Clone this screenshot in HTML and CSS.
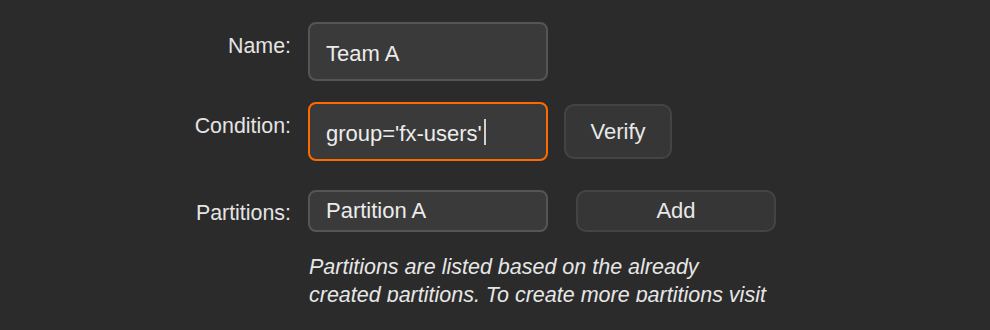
FILE: index.html
```html
<!DOCTYPE html>
<html lang="en">
<head>
<meta charset="utf-8">
<title>Team form</title>
<link rel="stylesheet" href="styles.css">
</head>
<body>
<div class="panel">
  <form class="form">
    <div class="row row-name">
      <label class="label">Name:</label>
      <div class="field field-tall">Team A</div>
    </div>
    <div class="row row-condition">
      <label class="label">Condition:</label>
      <div class="field field-tall field-focus">group='fx-users'<span class="caret"></span></div>
      <button type="button" class="btn btn-verify">Verify</button>
    </div>
    <div class="row row-partitions">
      <label class="label">Partitions:</label>
      <div class="field field-short">Partition A</div>
      <button type="button" class="btn btn-add">Add</button>
    </div>
    <div class="row row-help">
      <div class="label"></div>
      <p class="help">Partitions are listed based on the already created partitions. To create more partitions visit the partitions page.</p>
    </div>
  </form>
</div>
</body>
</html>
```

FILE: styles.css
```css
html, body {
  margin: 0;
  padding: 0;
  background: #2b2b2b;
}

body {
  font-family: "Liberation Sans", Arial, sans-serif;
  font-size: 22px;
  color: #e6e6e6;
}

.panel {
  height: 302px;
  overflow: hidden;
}

.form {
  padding-top: 22px;
  display: flex;
  flex-direction: column;
}

.row {
  display: flex;
  align-items: flex-start;
}

.row-name {
  margin-bottom: 21px;
}

.row-condition {
  margin-bottom: 29px;
}

.row-help {
  margin-top: 21px;
}

.label {
  width: 291px;
  flex: none;
  text-align: right;
  padding-top: 12px;
  margin-right: 17px;
  color: #e4e4e4;
  font-size: 21.4px;
  line-height: 24px;
}

.row-partitions .label {
  padding-top: 11px;
}

.row-help .label {
  padding-top: 0;
}

.field {
  box-sizing: border-box;
  width: 240px;
  flex: none;
  background: #3a3a3a;
  border: 2px solid #555555;
  border-radius: 8px;
  padding: 0 16px;
  display: flex;
  align-items: center;
  color: #ececec;
  line-height: 24px;
  white-space: nowrap;
}

.field-tall {
  height: 59px;
  padding-top: 4px;
}

.field-short {
  height: 42px;
}

.field-focus {
  border-color: #ff6a00;
}

.caret {
  flex: none;
  width: 2px;
  height: 26px;
  margin-left: 2px;
  margin-top: -4px;
  background: #d0d0d0;
}

.btn {
  box-sizing: border-box;
  flex: none;
  font: inherit;
  color: #e8e8e8;
  background: #363636;
  border: 2px solid #444444;
  border-radius: 10px;
  padding: 0;
  line-height: 24px;
}

.btn-verify {
  width: 108px;
  height: 55px;
  margin-left: 16px;
  margin-top: 2px;
}

.btn-add {
  width: 200px;
  height: 42px;
  margin-left: 28px;
}

.help {
  margin: 0 0 0 1px;
  width: 460px;
  font-size: 21.5px;
  font-style: italic;
  line-height: 28px;
  color: #e6e6e6;
}
```
